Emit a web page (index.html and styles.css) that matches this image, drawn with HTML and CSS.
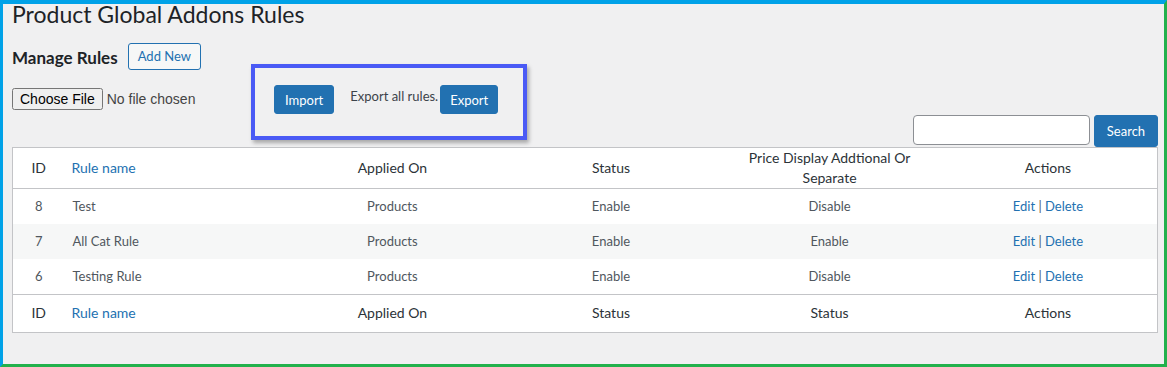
FILE: index.html
```html
<!DOCTYPE html>
<html lang="en">
<head>
    <meta charset="UTF-8">
    <meta name="viewport" content="width=device-width, initial-scale=1.0">
    <title>Product Global Addons Rules</title>
    <link rel="stylesheet" href="styles.css">
</head>
<body>
    <div class="frame">
        <div class="wrap">
            <h1 class="page-title">Product Global Addons Rules</h1>

            <div class="manage-row">
                <h2 class="manage-title">Manage Rules</h2>
                <a href="#" class="btn-outline">Add New</a>
            </div>

            <div class="tools-row">
                <input type="file" class="file-input">
                <div class="highlight">
                    <button class="btn-primary">Import</button>
                    <span class="export-label">Export all rules.</span>
                    <button class="btn-primary">Export</button>
                </div>
            </div>

            <div class="search-row">
                <input type="text" class="search-input">
                <button class="btn-primary btn-search">Search</button>
            </div>

            <table class="rules-table">
                <colgroup>
                    <col class="col-id">
                    <col><col><col><col><col>
                </colgroup>
                <thead>
                    <tr>
                        <th>ID</th>
                        <th class="name"><a href="#">Rule name</a></th>
                        <th>Applied On</th>
                        <th>Status</th>
                        <th>Price Display Addtional Or Separate</th>
                        <th>Actions</th>
                    </tr>
                </thead>
                <tbody>
                    <tr>
                        <td>8</td>
                        <td class="name">Test</td>
                        <td>Products</td>
                        <td>Enable</td>
                        <td>Disable</td>
                        <td><a href="#">Edit</a> | <a href="#">Delete</a></td>
                    </tr>
                    <tr class="alt">
                        <td>7</td>
                        <td class="name">All Cat Rule</td>
                        <td>Products</td>
                        <td>Enable</td>
                        <td>Enable</td>
                        <td><a href="#">Edit</a> | <a href="#">Delete</a></td>
                    </tr>
                    <tr>
                        <td>6</td>
                        <td class="name">Testing Rule</td>
                        <td>Products</td>
                        <td>Enable</td>
                        <td>Disable</td>
                        <td><a href="#">Edit</a> | <a href="#">Delete</a></td>
                    </tr>
                </tbody>
                <tfoot>
                    <tr>
                        <th>ID</th>
                        <th class="name"><a href="#">Rule name</a></th>
                        <th>Applied On</th>
                        <th>Status</th>
                        <th>Status</th>
                        <th>Actions</th>
                    </tr>
                </tfoot>
            </table>
        </div>
    </div>
</body>
</html>
```

FILE: styles.css
```css
body {
    margin: 0;
    padding: 0;
    font-family: Lato, "Open Sans", sans-serif;
    color: #1d2327;
}
.frame {
    height: 367px;
    box-sizing: border-box;
    background: #f0f0f1;
    border-top: 4px solid #00a2e8; /* light blue */
    border-left: 3px solid #00a2e8;
    border-right: 3px solid #22b14c; /* green */
    border-bottom: 3px solid #22b14c;
    overflow: hidden;
}
.wrap {
    padding: 0 6px 0 9px;
}
.page-title {
    margin: 0;
    font-size: 23px;
    font-weight: 400;
    line-height: 20px;
}
.manage-row {
    display: flex;
    align-items: flex-start;
    gap: 10px;
    margin-top: 19px;
}
.manage-title {
    margin: 1px 0 0;
    font-size: 17px;
    font-weight: 700;
    line-height: 27px;
}
.btn-outline {
    display: inline-block;
    height: 27px;
    box-sizing: border-box;
    padding: 0 9px;
    line-height: 25px;
    font-size: 13px;
    color: #2271b1;
    background: #f6f7f7;
    border: 1px solid #2271b1;
    border-radius: 3px;
    text-decoration: none;
}
.tools-row {
    display: flex;
    align-items: flex-start;
    margin-top: -7px;
}
.file-input {
    width: 239px;
    margin: 24px 0 0;
    font-family: "Liberation Sans", Arial, sans-serif;
    font-size: 14px;
    color: #444;
}
.highlight {
    display: flex;
    align-items: flex-start;
    width: 276px;
    height: 76px;
    box-sizing: border-box;
    padding: 17px 0 0 19px;
    border: 4px solid #4a5af5;
    box-shadow: 2px 3px 4px rgba(0,0,0,0.3);
}
.btn-primary {
    height: 29px;
    padding: 0 10px;
    font-family: inherit;
    font-size: 13px;
    color: #fff;
    background: #2271b1;
    border: 1px solid #2271b1;
    border-radius: 3px;
    cursor: pointer;
}
.export-label {
    margin: 1px 2px 0 16px;
    font-size: 13px;
    line-height: 20px;
    color: #3c434a;
}
.highlight .btn-primary:last-child {
    padding: 0 9px;
}
.search-row {
    display: flex;
    justify-content: flex-end;
    align-items: flex-start;
    gap: 4px;
    margin-top: -25px;
}
.search-input {
    width: 177px;
    height: 30px;
    box-sizing: border-box;
    border: 1px solid #8c8f94;
    border-radius: 4px;
    background: #fff;
}
.btn-search {
    height: 32px;
    width: 64px;
}
.rules-table {
    width: 100%;
    table-layout: fixed;
    border-collapse: collapse;
    background: #fff;
    border: 1px solid #c3c4c7;
}
.col-id {
    width: 52px;
}
.rules-table th {
    font-size: 14px;
    font-weight: 400;
    line-height: 20px;
    color: #2c3338;
    text-align: center;
    padding: 0 10px;
    vertical-align: middle;
}
.rules-table thead th {
    height: 40px;
    border-bottom: 1px solid #c3c4c7;
}
.rules-table tfoot th {
    padding: 8px 10px 9px;
    border-top: 1px solid #c3c4c7;
}
.rules-table td {
    font-size: 13px;
    line-height: 20px;
    color: #50575e;
    text-align: center;
    padding: 7px 10px 8px;
}
.rules-table .name {
    text-align: left;
    padding-left: 7px;
}
.rules-table td.name {
    padding-left: 8px;
}
.rules-table tr.alt td {
    background: #f6f7f7;
}
.rules-table a {
    color: #2271b1;
    text-decoration: none;
}
```
